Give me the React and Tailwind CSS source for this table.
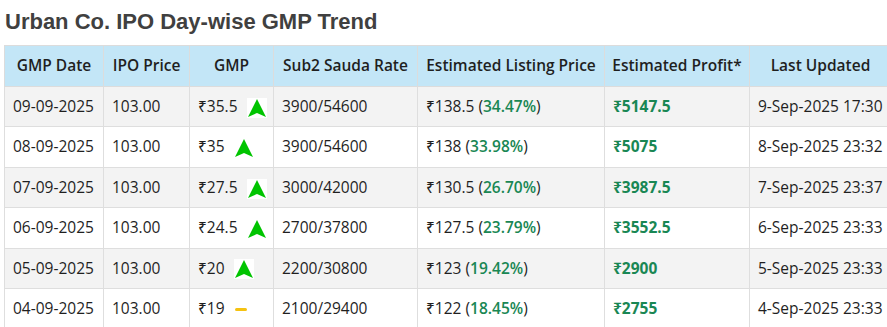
const rows = [
  { date: "09-09-2025", gmp: "₹35.5", trend: "up", sauda: "3900/54600", listing: "₹138.5", pct: "34.47%", profit: "₹5147.5", updated: "9-Sep-2025 17:30" },
  { date: "08-09-2025", gmp: "₹35", trend: "up", sauda: "3900/54600", listing: "₹138", pct: "33.98%", profit: "₹5075", updated: "8-Sep-2025 23:32" },
  { date: "07-09-2025", gmp: "₹27.5", trend: "up", sauda: "3000/42000", listing: "₹130.5", pct: "26.70%", profit: "₹3987.5", updated: "7-Sep-2025 23:37" },
  { date: "06-09-2025", gmp: "₹24.5", trend: "up", sauda: "2700/37800", listing: "₹127.5", pct: "23.79%", profit: "₹3552.5", updated: "6-Sep-2025 23:33" },
  { date: "05-09-2025", gmp: "₹20", trend: "up", sauda: "2200/30800", listing: "₹123", pct: "19.42%", profit: "₹2900", updated: "5-Sep-2025 23:33" },
  { date: "04-09-2025", gmp: "₹19", trend: "flat", sauda: "2100/29400", listing: "₹122", pct: "18.45%", profit: "₹2755", updated: "4-Sep-2025 23:33" },
];

const headers = ["GMP Date", "IPO Price", "GMP", "Sub2 Sauda Rate", "Estimated Listing Price", "Estimated Profit*", "Last Updated"];
const widths = ["w-[99px]", "w-[86px]", "w-[84px]", "w-[144px]", "w-[187px]", "w-[145px]", "w-[142px]"];

function TrendIcon({ trend }) {
  if (trend === "flat") {
    return <span className="ml-[10px] inline-block h-[3px] w-[12px] rounded-sm bg-[#f5c211] align-middle" />;
  }
  // little green pointer arrow on a white tile
  return (
    <span className="ml-[9px] inline-flex h-[20px] w-[20px] items-center justify-center bg-white align-middle">
      <svg viewBox="0 0 20 20" width="20" height="20">
        <path d="M10 1 L19 19 L10 15 L1 19 Z" fill="#00c400" />
      </svg>
    </span>
  );
}

export default function App() {
  return (
    <div className="h-[327px] w-[887px] overflow-hidden bg-white" style={{ fontFamily: "'Open Sans', 'Noto Sans', sans-serif" }}>
      <h2 className="pl-[5px] pt-[9px] pb-[10px] text-[22px] leading-[26px] font-bold text-[#404040]" style={{ fontFamily: "'Liberation Sans', Arial, sans-serif" }}>
        Urban Co. IPO Day-wise GMP Trend
      </h2>
      <table className="ml-[4px] w-[887px] table-fixed border-collapse text-[15.5px] text-[#1f1f1f]">
        <thead>
          <tr className="bg-[#c3e6f7]">
            {headers.map((h, i) => (
              <th key={h} className={`${widths[i]} h-[41px] border border-[#dcdcdc] px-1 text-center font-semibold whitespace-nowrap text-[#1f1f1f]`}>
                {h}
              </th>
            ))}
          </tr>
        </thead>
        <tbody>
          {rows.map((r, i) => (
            <tr key={r.date} className={i % 2 === 0 ? "bg-[#f3f3f3]" : "bg-white"}>
              <td className="h-[40.4px] border border-[#dedede] px-2 whitespace-nowrap">{r.date}</td>
              <td className="border border-[#dedede] px-2">103.00</td>
              <td className="border border-[#dedede] px-2 whitespace-nowrap">
                {r.gmp}
                <TrendIcon trend={r.trend} />
              </td>
              <td className="border border-[#dedede] px-2">{r.sauda}</td>
              <td className="border border-[#dedede] px-2 whitespace-nowrap">
                {r.listing} (<span className="font-semibold text-[#198754]">{r.pct}</span>)
              </td>
              <td className="border border-[#dedede] px-2 font-bold text-[#198754]">{r.profit}</td>
              <td className="border border-[#dedede] px-2 whitespace-nowrap">{r.updated}</td>
            </tr>
          ))}
        </tbody>
      </table>
    </div>
  );
}
